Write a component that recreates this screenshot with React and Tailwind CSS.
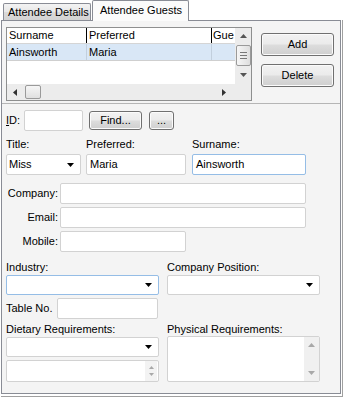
import React from 'react';

const font = "font-['Liberation_Sans',Arial,sans-serif]";

const Tri = ({ dir = 'down', color = '#000', w = 7, h = 4 }) => {
  const paths = {
    down: `M0 0H${w}L${w / 2} ${h}Z`,
    up: `M0 ${h}H${w}L${w / 2} 0Z`,
  };
  return (
    <svg width={w} height={h} viewBox={`0 0 ${w} ${h}`} className="block">
      <path d={paths[dir]} fill={color} />
    </svg>
  );
};

const TriSide = ({ dir = 'left', color = '#333' }) => (
  <svg width="4" height="7" viewBox="0 0 4 7" className="block">
    <path d={dir === 'left' ? 'M4 0V7L0 3.5Z' : 'M0 0V7L4 3.5Z'} fill={color} />
  </svg>
);

const Button = ({ className = '', children }) => (
  <div
    className={`flex items-center justify-center border border-[#707070] rounded-[3px] bg-[linear-gradient(#f2f2f2,#ebebeb_48%,#dddddd_52%,#cfcfcf)] shadow-[inset_0_0_0_1px_#fbfbfb] ${className}`}
  >
    {children}
  </div>
);

const TextBox = ({ className = '', value = '' }) => (
  <div className={`bg-white border rounded-[2px] px-[3px] flex items-center whitespace-nowrap ${className}`}>
    {value}
  </div>
);

const Select = ({ className = '', value = '' }) => (
  <div className={`bg-white border rounded-[2px] pl-[2px] pr-[6px] flex items-center ${className}`}>
    <span className="flex-1">{value}</span>
    <Tri />
  </div>
);

const Grid = () => (
  <div className="w-[246px] h-[74px] border border-[#8e8f8f] bg-white flex">
    <div className="w-[228px] flex flex-col">
      <div className="h-[16px] flex border-b border-[#d5d5d5] leading-[15px]">
        <div className="w-[80px] border-r border-black pl-[2px]">Surname</div>
        <div className="w-[125px] border-r border-black pl-[2px]">Preferred</div>
        <div className="flex-1 overflow-hidden whitespace-nowrap pl-[1px]">Gue</div>
      </div>
      <div className="h-[17px] flex bg-[#d9e7f6] border-b border-[#cfcfcf] leading-[16px]">
        <div className="w-[80px] border-r border-[#c2cfdd] pl-[2px]">Ainsworth</div>
        <div className="w-[125px] border-r border-[#c2cfdd] pl-[2px]">Maria</div>
        <div className="flex-1" />
      </div>
      <div className="flex-1" />
      <div className="h-[16px] bg-[#ececec] flex items-center">
        <div className="w-[16px] flex justify-center">
          <TriSide dir="left" />
        </div>
        <div className="ml-[2px] w-[16px] h-[14px] border border-[#9a9a9a] rounded-[2px] bg-[linear-gradient(#f6f6f6,#e0e0e0)]" />
        <div className="flex-1" />
        <div className="w-[16px] mr-[3px] flex justify-center">
          <TriSide dir="right" />
        </div>
      </div>
    </div>
    <div className="w-[16px] bg-[#ececec] flex flex-col items-center">
      <div className="h-[16px] flex items-center justify-center">
        <Tri dir="up" color="#555" w={7} h={4} />
      </div>
      <div className="mt-[1px] w-[15px] h-[21px] border border-[#9a9a9a] rounded-[2px] bg-[linear-gradient(90deg,#f6f6f6,#dedede)] flex flex-col items-center justify-center gap-[2px]">
        <div className="w-[7px] h-px bg-[#777]" />
        <div className="w-[7px] h-px bg-[#777]" />
        <div className="w-[7px] h-px bg-[#777]" />
      </div>
      <div className="h-[16px] mt-[1px] flex items-center justify-center">
        <Tri dir="down" color="#555" w={7} h={4} />
      </div>
      <div className="flex-1" />
    </div>
  </div>
);

const plain = 'border-[#d2d2d2]';
const focus = 'border-[#95bde6]';

export default function App() {
  return (
    <div className={`w-[345px] h-[400px] bg-white text-[11px] leading-[13px] text-black ${font}`}>
      {/* tab strip */}
      <div className="flex items-end h-[20px] pl-[3px]">
        <div className="h-[17px] w-[88px] border border-b-0 border-[#898c95] rounded-t-[2px] bg-[linear-gradient(#f3f3f3,#e7e7e7_50%,#dadada_50%,#d3d3d3)] pl-[4px] leading-[16px]">
          Attendee Details
        </div>
        <div className="relative z-10 -mb-px ml-[1px] h-[21px] w-[97px] border border-b-0 border-[#898c95] rounded-t-[2px] bg-[#fbfbfb] pl-[7px] leading-[18px]">
          Attendee Guests
        </div>
      </div>

      <div className="ml-[1px] w-[342px] border-r border-b border-[#a0a0a0] pr-[1px] pb-[2px]">
        <div className="w-[340px] h-[374px] border border-[#898c95] bg-[#f4f4f4]">
          {/* guest list */}
          <div className="h-[83px] border-b border-[#b5b5b5] flex pl-[4px] pt-[6px]">
            <Grid />
            <div className="ml-[9px] pt-[6px] flex flex-col gap-[8px]">
              <Button className="w-[73px] h-[23px]">Add</Button>
              <Button className="w-[73px] h-[23px]">Delete</Button>
            </div>
          </div>

          {/* guest details */}
          <div className="pl-[4px] pt-[6px]">
            <div className="flex items-center h-[21px]">
              <span className="w-[18px]">
                <span className="underline">I</span>D:
              </span>
              <TextBox className={`w-[59px] h-[21px] ${plain}`} />
              <Button className="ml-[6px] w-[53px] h-[19px]">Find...</Button>
              <Button className="ml-[7px] w-[25px] h-[19px]">...</Button>
            </div>

            <div className="flex mt-[7px]">
              <div className="w-[75px] flex flex-col">
                <span>Title:</span>
                <Select className={`mt-[3px] h-[21px] ${plain}`} value="Miss" />
              </div>
              <div className="ml-[5px] w-[100px] flex flex-col">
                <span>Preferred:</span>
                <TextBox className={`mt-[3px] h-[21px] ${plain}`} value="Maria" />
              </div>
              <div className="ml-[6px] w-[114px] flex flex-col">
                <span>Surname:</span>
                <TextBox className={`mt-[3px] h-[21px] ${focus}`} value="Ainsworth" />
              </div>
            </div>

            <div className="flex items-center mt-[8px]">
              <span className="w-[52px] text-right">Company:</span>
              <TextBox className={`ml-[2px] w-[246px] h-[21px] ${plain}`} />
            </div>
            <div className="flex items-center mt-[3px]">
              <span className="w-[52px] text-right">Email:</span>
              <TextBox className={`ml-[2px] w-[246px] h-[21px] ${plain}`} />
            </div>
            <div className="flex items-center mt-[3px]">
              <span className="w-[52px] text-right">Mobile:</span>
              <TextBox className={`ml-[2px] w-[126px] h-[21px] ${plain}`} />
            </div>

            <div className="flex mt-[9px]">
              <div className="w-[153px] flex flex-col">
                <span>Industry:</span>
                <Select className={`mt-[1px] h-[20px] ${focus}`} />
              </div>
              <div className="ml-[8px] w-[153px] flex flex-col">
                <span>Company Position:</span>
                <Select className={`mt-[1px] h-[20px] ${plain}`} />
              </div>
            </div>

            <div className="flex items-center mt-[3px]">
              <span className="w-[51px]">Table No.</span>
              <TextBox className={`w-[101px] h-[21px] ${plain}`} />
            </div>

            <div className="flex mt-[4px]">
              <div className="w-[153px] flex flex-col">
                <span>Dietary Requirements:</span>
                <Select className={`mt-[1px] h-[20px] ${plain}`} />
                <div className={`mt-[3px] h-[22px] bg-white border rounded-[2px] flex justify-end ${plain}`}>
                  <div className="w-[12px] mr-[1px] bg-[#f3f3f3] flex flex-col items-center justify-center gap-[4px]">
                    <Tri dir="up" color="#a8a8a8" w={5} h={3} />
                    <Tri dir="down" color="#a8a8a8" w={5} h={3} />
                  </div>
                </div>
              </div>
              <div className="ml-[8px] w-[153px] flex flex-col">
                <span>Physical Requirements:</span>
                <div className={`h-[46px] bg-white border rounded-[2px] flex justify-end ${plain}`}>
                  <div className="w-[15px] bg-[#f0f0f0] flex flex-col items-center justify-between py-[6px]">
                    <Tri dir="up" color="#a8a8a8" w={7} h={4} />
                    <Tri dir="down" color="#a8a8a8" w={7} h={4} />
                  </div>
                </div>
              </div>
            </div>
          </div>
        </div>
      </div>
    </div>
  );
}
